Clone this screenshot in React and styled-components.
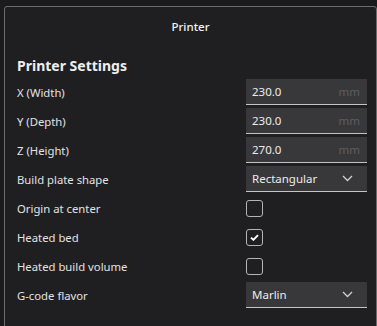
import React from "react";
import styled, { createGlobalStyle } from "styled-components";

const Global = createGlobalStyle`
  html, body { margin: 0; padding: 0; background: #1b1b1d; overflow: hidden; }
  body { font-family: "Noto Sans", "Open Sans", sans-serif; color: #e4e4e4; }
  #root { height: 326px; overflow: hidden; }
`;

const Page = styled.div`
  padding: 6px 0 0 4px;
  height: 320px;
  overflow: hidden;
`;

const Panel = styled.section`
  width: 371px;
  height: 400px;
  border: 1px solid #6c6c6e;
  border-radius: 3px 3px 0 0;
  background: #1f1f22;
  display: flex;
  flex-direction: column;
`;

const Title = styled.div`
  height: 38px;
  display: flex;
  align-items: center;
  justify-content: center;
  font-size: 11.5px;
  font-weight: 500;
  color: #f2f2f2;
`;

const Body = styled.div`
  padding: 11px 9px 0 12px;
  display: flex;
  flex-direction: column;
`;

const Heading = styled.h2`
  margin: 0 0 3px;
  height: 20px;
  line-height: 20px;
  font-size: 14px;
  font-weight: 700;
  color: #eeeeee;
  margin-top: ${(p) => (p.$gap ? "15px" : "0")};
`;

const Rows = styled.div`
  display: flex;
  flex-direction: column;
  gap: 3px;
`;

const Row = styled.div`
  height: 26px;
  display: grid;
  grid-template-columns: 229px 121px;
  align-items: center;
`;

const Label = styled.span`
  font-size: 11.3px;
  color: #e2e2e2;
`;

const Field = styled.div`
  height: 25px;
  border-bottom: 1px solid #c4c4c6;
  background: #38383b;
  display: flex;
  align-items: center;
  justify-content: space-between;
  padding: 0 ${(p) => (p.$select ? "14px" : "7px")} 0 6px;
  font-size: 11.5px;
  color: #ececec;
`;

const Unit = styled.span`
  color: #5e5e61;
  font-size: 11.5px;
`;

const Box = styled.div`
  width: 15px;
  height: 15px;
  border: 1px solid #b4b4b6;
  border-radius: 3px;
  display: flex;
  align-items: center;
  justify-content: center;
`;

const NumberField = ({ value }) => (
  <Field>
    <span>{value}</span>
    <Unit>mm</Unit>
  </Field>
);

const Chevron = () => (
  <svg width="11" height="7" viewBox="0 0 11 7" fill="none">
    <polyline points="1,1 5.5,5.5 10,1" stroke="#d0d0d2" strokeWidth="1.3" />
  </svg>
);

const Select = ({ value }) => (
  <Field $select>
    <span>{value}</span>
    <Chevron />
  </Field>
);

const Check = ({ checked }) => (
  <Box>
    {checked && (
      <svg width="9" height="7" viewBox="0 0 9 7" fill="none">
        <polyline points="1,3.6 3.4,5.8 8,1.2" stroke="#ffffff" strokeWidth="1.9" />
      </svg>
    )}
  </Box>
);

const rows = [
  ["X (Width)", <NumberField value="230.0" />],
  ["Y (Depth)", <NumberField value="230.0" />],
  ["Z (Height)", <NumberField value="270.0" />],
  ["Build plate shape", <Select value="Rectangular" />],
  ["Origin at center", <Check />],
  ["Heated bed", <Check checked />],
  ["Heated build volume", <Check />],
  ["G-code flavor", <Select value="Marlin" />],
];

export default function App() {
  return (
    <>
      <Global />
      <Page>
        <Panel>
          <Title>Printer</Title>
          <Body>
            <Heading>Printer Settings</Heading>
            <Rows>
              {rows.map(([label, control]) => (
                <Row key={label}>
                  <Label>{label}</Label>
                  {control}
                </Row>
              ))}
            </Rows>
            <Heading $gap>Printhead Settings</Heading>
          </Body>
        </Panel>
      </Page>
    </>
  );
}
